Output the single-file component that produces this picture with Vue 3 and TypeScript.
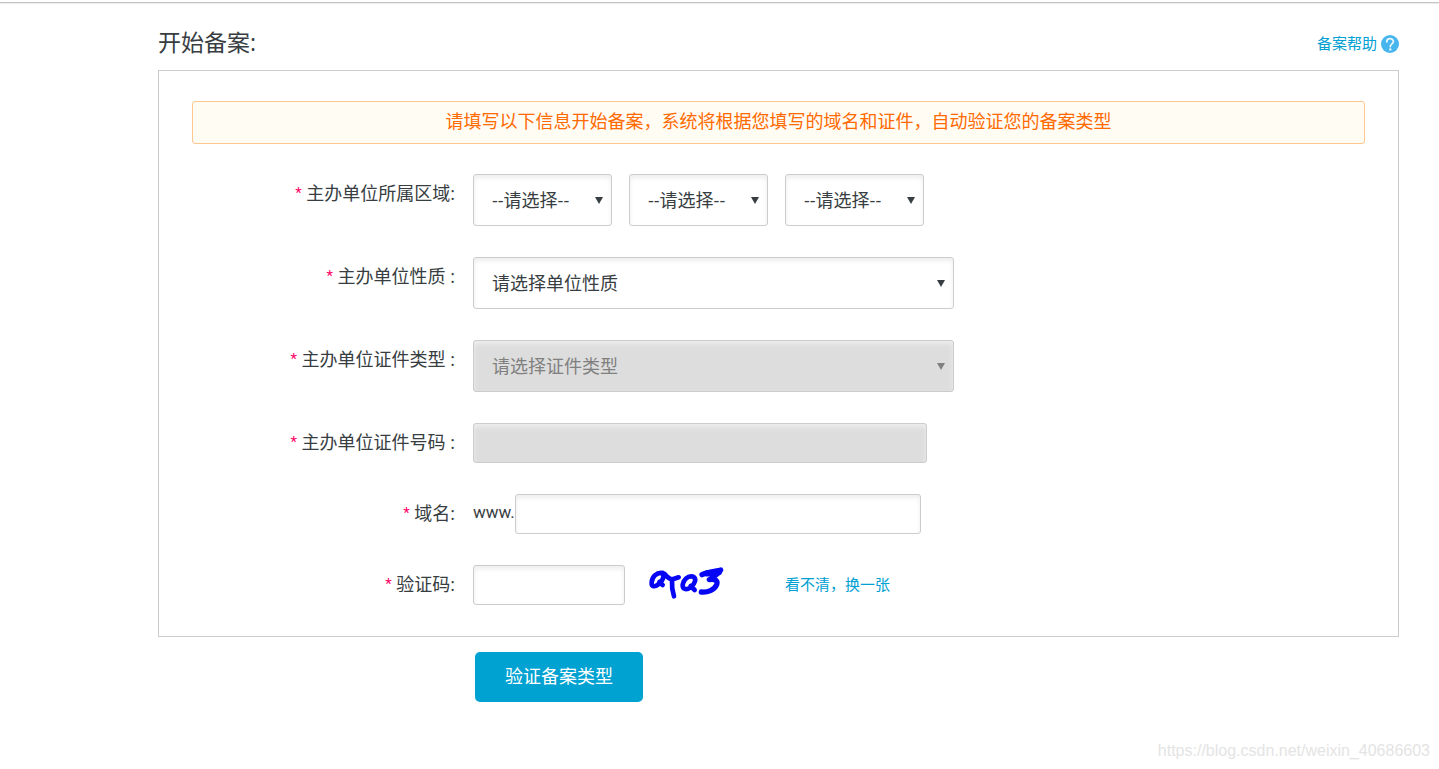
<script setup lang="ts">
import { ref } from 'vue'

const areas = [
  { id: 'province', name: '省份' },
  { id: 'city', name: '城市' },
  { id: 'district', name: '区县' },
]
const certNumber = ref('')
const domain = ref('')
const captcha = ref('')
</script>

<template>
  <div class="page">
    <header class="head">
      <h1 class="title">开始备案:</h1>
      <a class="link help" href="#help">
        备案帮助
        <svg class="help-icon" viewBox="0 0 18 18" aria-hidden="true">
          <circle cx="9" cy="9" r="9" fill="#47b5ee" />
          <path d="M5.8 6.8C5.8 2.7 12.4 2.8 12.4 6.5C12.4 9 9.3 8.8 9.3 11.6" fill="none" stroke="#e8f6fd" stroke-width="1.8" stroke-linecap="round" />
          <circle cx="9.3" cy="14.4" r="1.2" fill="#e8f6fd" />
        </svg>
      </a>
    </header>

    <form id="record" class="panel" @submit.prevent>
      <p class="notice">请填写以下信息开始备案，系统将根据您填写的域名和证件，自动验证您的备案类型</p>

      <div class="row">
        <label class="label" for="province"><span class="star">*</span> 主办单位所属区域:</label>
        <div class="areas">
          <span v-for="a in areas" :key="a.id" class="select short">
            <select :id="a.id" :aria-label="a.name"><option>--请选择--</option></select>
          </span>
        </div>
      </div>

      <div class="row">
        <label class="label" for="nature"><span class="star">*</span> 主办单位性质 :</label>
        <span class="select long">
          <select id="nature"><option>请选择单位性质</option></select>
        </span>
      </div>

      <div class="row">
        <label class="label" for="cert-type"><span class="star">*</span> 主办单位证件类型 :</label>
        <span class="select long disabled">
          <select id="cert-type" disabled><option>请选择证件类型</option></select>
        </span>
      </div>

      <div class="row">
        <label class="label" for="cert-number"><span class="star">*</span> 主办单位证件号码 :</label>
        <input id="cert-number" v-model="certNumber" class="input number" type="text" disabled />
      </div>

      <div class="row">
        <label class="label" for="domain"><span class="star">*</span> 域名:</label>
        <div class="domain">
          <span class="prefix">www.</span>
          <input id="domain" v-model="domain" class="input host" type="text" />
        </div>
      </div>

      <div class="row">
        <label class="label" for="captcha"><span class="star">*</span> 验证码:</label>
        <div class="captcha">
          <input id="captcha" v-model="captcha" class="input code" type="text" />
          <svg class="captcha-image" viewBox="45 45 285 120" role="img" aria-label="验证码图片">
            <g fill="none" stroke="#0606f5" stroke-width="14" stroke-linecap="round" stroke-linejoin="round">
              <path d="M98 69C80 66 66 80 65 97C64 111 74 112 85 103C97 93 104 80 98 69M88 96L98 105" />
              <path d="M104 72C112 82 120 88 128 88L146 82M126 92C125 108 128 126 132 139" />
              <path d="M190 80C172 76 160 90 158 104C157 120 171 121 184 110C196 99 200 86 190 80M182 108L194 120" />
              <path d="M216 74C232 66 254 64 272 60C264 72 252 80 238 89C256 86 264 92 260 104C254 120 232 128 214 126" stroke-width="16" />
              <path d="M232 70L266 66" stroke-width="19" />
            </g>
          </svg>
          <a class="link" href="#refresh">看不清，换一张</a>
        </div>
      </div>
    </form>

    <button class="submit" type="submit" form="record">验证备案类型</button>
    <div class="watermark">https://blog.csdn.net/weixin_40686603</div>
  </div>
</template>

<style>
body {
  margin: 0;
  background: #fff;
}
</style>

<style scoped>
.page {
  box-sizing: border-box;
  min-height: 100vh;
  padding: 2px 40px 32px 158px;
  position: relative;
  color: #373d41;
  font-family: "Open Sans", "Noto Sans CJK SC", sans-serif;
  font-size: 18px;
}
.page::before {
  content: "";
  position: absolute;
  top: 2px;
  left: 0;
  right: 0;
  height: 1px;
  background: #c4c4c8;
  box-shadow: 0 1px 0 #ececec;
}
.head {
  display: flex;
  align-items: center;
  justify-content: space-between;
  height: 68px;
  padding-top: 14px;
  box-sizing: border-box;
}
.title {
  margin: 0;
  padding-bottom: 2px;
  font-size: 23px;
  line-height: 32px;
  font-weight: 400;
}
.link {
  color: #00a0d2;
  font-size: 15px;
  line-height: 20px;
  text-decoration: none;
}
.help {
  display: flex;
  align-items: center;
  gap: 4px;
}
.help-icon {
  width: 18px;
  height: 18px;
  margin-top: 2px;
}
.panel {
  display: flex;
  flex-direction: column;
  gap: 31px;
  padding: 30px 33px 31px;
  border: 1px solid #ccc;
}
.notice {
  margin: 0 0 -1px;
  padding: 0 10px 2px;
  border: 1px solid #fdc890;
  border-radius: 3px;
  background: #fffcf4;
  color: #ff6a00;
  line-height: 39px;
  text-align: center;
}
.row {
  display: grid;
  grid-template-columns: 263px 1fr;
  column-gap: 18px;
  align-items: start;
}
.label {
  line-height: 38px;
  text-align: right;
  white-space: nowrap;
}
.star {
  color: #f06;
  font-family: Roboto, sans-serif;
  font-size: 15px;
  line-height: 20px;
  vertical-align: 2px;
}
.areas {
  display: flex;
  gap: 17px;
}
.select {
  display: block;
  position: relative;
}
.short {
  width: 139px;
}
.long {
  width: 481px;
}
.select select {
  appearance: none;
  display: block;
  width: 100%;
  height: 52px;
  padding: 0 18px;
}
.select select,
.input {
  box-sizing: border-box;
  margin: 0;
  border: 1px solid #ccc;
  border-radius: 3px;
  background: #fff;
  box-shadow: inset 0 3px 5px #eee;
  color: #373d41;
  font: inherit;
  outline: none;
}
.select::after {
  content: "";
  position: absolute;
  right: 9px;
  top: 23px;
  border: 4px solid transparent;
  border-top: 7px solid #373d41;
  border-bottom: 0;
  pointer-events: none;
}
.select select:disabled,
.input:disabled {
  background: #ddd;
  color: #808080;
  opacity: 1;
}
.disabled::after {
  border-top-color: #808080;
}
.input {
  height: 40px;
  padding: 0 12px;
}
.number {
  width: 454px;
}
.domain {
  display: flex;
}
.prefix {
  width: 42px;
  font-family: Roboto, sans-serif;
  font-size: 17px;
  line-height: 36px;
}
.host {
  width: 406px;
}
.captcha {
  display: flex;
  align-items: center;
}
.captcha .link {
  padding-bottom: 2px;
}
.code {
  width: 152px;
}
.captcha-image {
  width: 95px;
  height: 40px;
  margin: 0 45px 0 20px;
}
.submit {
  display: block;
  height: 50px;
  margin: 15px 0 0 317px;
  padding: 0 30px 4px;
  border: 0;
  border-radius: 5px;
  background: #00a2d2;
  color: #fff;
  font: inherit;
  cursor: pointer;
}
.watermark {
  position: absolute;
  right: 9px;
  bottom: 8px;
  color: #e4e4e4;
  font-family: "Liberation Sans", sans-serif;
  font-size: 16px;
  line-height: 20px;
}
</style>
